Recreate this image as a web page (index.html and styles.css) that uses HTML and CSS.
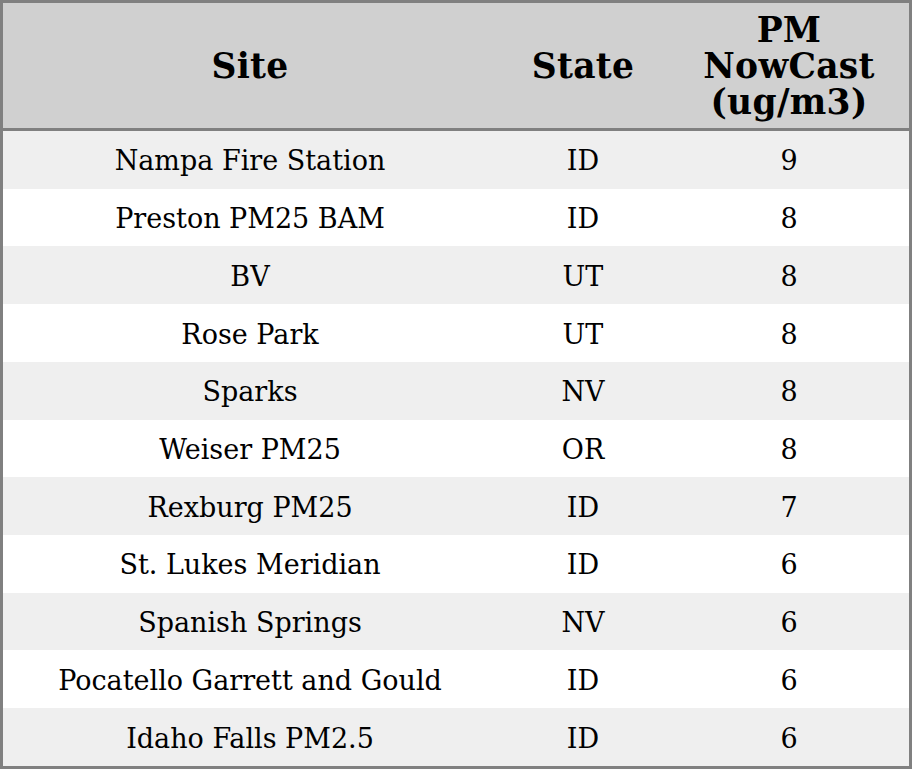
FILE: index.html
```html
<!DOCTYPE html>
<html>
<head>
<meta charset="utf-8">
<link rel="stylesheet" href="styles.css">
</head>
<body>
<table class="aq-table">
  <thead>
    <tr>
      <th class="col-site">Site</th>
      <th class="col-state">State</th>
      <th class="col-pm">PM<br>NowCast<br>(ug/m3)</th>
    </tr>
  </thead>
  <tbody>
    <tr><td>Nampa Fire Station</td><td>ID</td><td>9</td></tr>
    <tr><td>Preston PM25 BAM</td><td>ID</td><td>8</td></tr>
    <tr><td>BV</td><td>UT</td><td>8</td></tr>
    <tr><td>Rose Park</td><td>UT</td><td>8</td></tr>
    <tr><td>Sparks</td><td>NV</td><td>8</td></tr>
    <tr><td>Weiser PM25</td><td>OR</td><td>8</td></tr>
    <tr><td>Rexburg PM25</td><td>ID</td><td>7</td></tr>
    <tr><td>St. Lukes Meridian</td><td>ID</td><td>6</td></tr>
    <tr><td>Spanish Springs</td><td>NV</td><td>6</td></tr>
    <tr><td>Pocatello Garrett and Gould</td><td>ID</td><td>6</td></tr>
    <tr><td>Idaho Falls PM2.5</td><td>ID</td><td>6</td></tr>
  </tbody>
</table>
</body>
</html>
```
FILE: styles.css
```css
html, body {
  margin: 0;
  padding: 0;
  background: #ffffff;
}
.aq-table {
  width: 912px;
  height: 769px;
  border-collapse: separate;
  border-spacing: 0;
  border: 3px solid #808080;
  font-family: "DejaVu Serif", serif;
  color: #000;
  table-layout: fixed;
}
.aq-table th {
  background: #d0d0d0;
  font-size: 34.5px;
  line-height: 36px;
  font-weight: bold;
  letter-spacing: 0.3px;
  height: 125px;
  padding: 0;
  border-bottom: 3px solid #808080;
  text-align: center;
  vertical-align: middle;
}
.col-site { width: 494px; }
.col-state { width: 172px; }
.col-pm { width: 240px; }
.aq-table td {
  font-size: 27px;
  text-align: center;
  vertical-align: middle;
  padding: 2px 0 0 0;
  height: 55.7px;
  background: #ffffff;
}
.aq-table tbody tr:nth-child(odd) td {
  background: #efefef;
}
```
